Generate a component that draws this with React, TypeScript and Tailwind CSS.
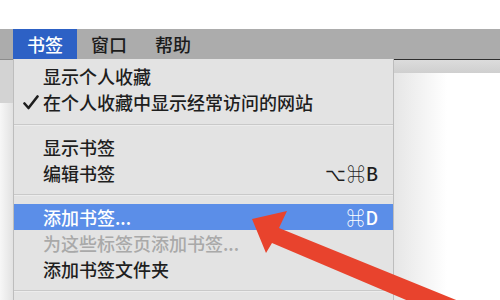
import React from "react";

const font = { fontFamily: '"Noto Sans CJK SC", "Noto Sans", sans-serif' };

function Row({
  label,
  shortcut,
  checked,
  active,
  disabled,
}: {
  label: string;
  shortcut?: string;
  checked?: boolean;
  active?: boolean;
  disabled?: boolean;
}) {
  return (
    <div
      className={`relative flex h-[26px] items-center justify-between pl-[29px] pr-[14px] text-[18px] font-medium leading-none ${
        active ? "bg-[#5b8ee8] text-white" : disabled ? "text-[#a9a9a9]" : "text-[#1e1e1e]"
      }`}
    >
      {checked && (
        <svg className="absolute left-[9px] top-[6px]" width="16" height="15" viewBox="0 0 16 15">
          <path d="M1.5 8.5 L5.5 13 L14.5 1.5" fill="none" stroke="#1e1e1e" strokeWidth="2.6" strokeLinecap="round" strokeLinejoin="round" />
        </svg>
      )}
      <span>{label}</span>
      {shortcut && <span className="tracking-[1px]">{shortcut}</span>}
    </div>
  );
}

function Sep({ h }: { h: string }) {
  return (
    <div className={`flex ${h} flex-col justify-center`}>
      <div className="h-px bg-[#c9c9c9]" />
      <div className="h-px bg-[#ececec]" />
    </div>
  );
}

export default function App() {
  return (
    <div className="relative h-[300px] w-[500px] overflow-hidden bg-white" style={font}>
      <div className="h-[29px] bg-white" />
      <div className="flex h-[30px] items-stretch bg-[#acacac] text-[18px] font-medium text-[#1b1b1b]">
        <div className="w-[13px]" />
        <div className="flex w-[64px] items-center justify-center bg-[#2d61c5] text-white">书签</div>
        <div className="flex w-[64px] items-center justify-center">窗口</div>
        <div className="flex w-[64px] items-center justify-center">帮助</div>
      </div>
      <div className="flex h-[241px]">
        <div className="flex w-[13px] flex-col border-t border-[#8c8c8c]">
          <div className="h-[43px] bg-[#d3d3d3]" />
          <div className="flex-1 bg-gradient-to-r from-[#f7f7f7] to-[#e2e2e2]" />
        </div>
        <div className="w-[381px] border-x border-[#bdbdbd] bg-[#e3e3e3] pt-[4px]">
          <Row label="显示个人收藏" />
          <Row label="在个人收藏中显示经常访问的网站" checked />
          <Sep h="h-[19px]" />
          <Row label="显示书签" />
          <Row label="编辑书签" shortcut="⌥⌘B" />
          <Sep h="h-[18px]" />
          <Row label="添加书签..." shortcut="⌘D" active />
          <Row label="为这些标签页添加书签..." disabled />
          <Row label="添加书签文件夹" />
          <Sep h="h-[18px]" />
        </div>
        <div className="flex flex-1 flex-col border-t border-[#2e2e2e]">
          <div className="h-[13px] bg-gradient-to-b from-[#dcdcdc] to-[#cfcfcf]" />
          <div className="flex-1 bg-gradient-to-r from-[#e6e6e6] via-white to-white" />
        </div>
      </div>
      <svg className="absolute left-0 top-0" width="500" height="300" viewBox="0 0 500 300">
        <polygon points="252,219 287,211 279,228 466,304 458,322 272,243 266,253" fill="#e8432d" />
      </svg>
    </div>
  );
}
